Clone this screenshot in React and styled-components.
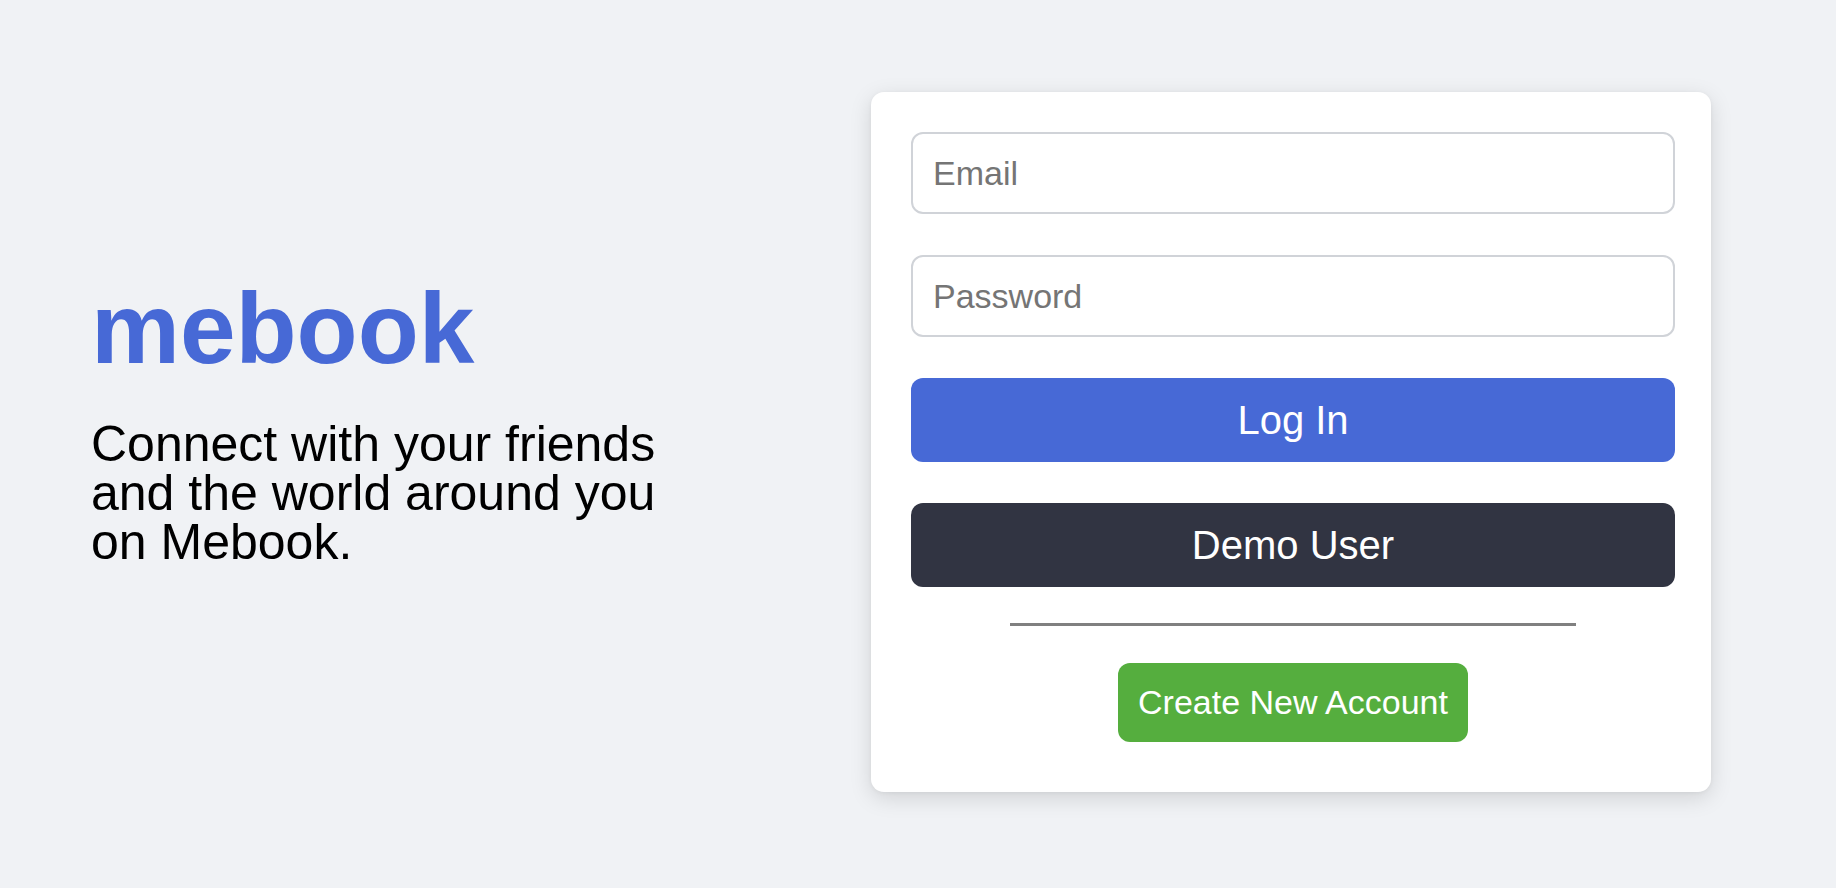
import React from "react";
import styled, { createGlobalStyle } from "styled-components";

const Global = createGlobalStyle`
  html, body { margin: 0; padding: 0; }
  body {
    background: #f0f2f5;
    font-family: "Liberation Sans", Arial, Helvetica, sans-serif;
    min-height: 888px;
  }
  * { box-sizing: border-box; }
`;

const Page = styled.main`
  display: flex;
  align-items: flex-start;
  padding: 92px 125px 0 91px;
  min-height: 888px;
`;

const Intro = styled.section`
  flex: 1;
  padding-top: 186px;
`;

const Logo = styled.h1`
  margin: 0;
  font-size: 100px;
  line-height: 100px;
  font-weight: 700;
  color: #4769d6;
  white-space: nowrap;
`;

const Tagline = styled.p`
  margin: 42px 0 0;
  font-size: 50px;
  line-height: 49px;
  font-weight: 400;
  color: #000;
  white-space: nowrap;
`;

const Card = styled.form`
  width: 840px;
  height: 700px;
  background: #fff;
  border-radius: 13px;
  box-shadow: 0 6px 22px rgba(0, 0, 0, 0.13), 0 1px 4px rgba(0, 0, 0, 0.05);
  padding: 40px 36px 0 40px;
  display: flex;
  flex-direction: column;
  align-items: center;
`;

const Input = styled.input`
  width: 764px;
  height: 82px;
  margin-bottom: 41px;
  border: 2px solid #d0d3d8;
  border-radius: 12px;
  padding: 0 20px;
  font-family: "Liberation Sans", Arial, sans-serif;
  font-size: 34px;
  color: #1c1e21;
  background: #fff;
  outline: none;
  &::placeholder { color: #757575; }
`;

const Button = styled.button`
  width: 764px;
  height: 84px;
  margin-bottom: ${(p) => p.$mb}px;
  border: none;
  border-radius: 12px;
  background: ${(p) => p.$bg};
  color: #fff;
  font-family: "Liberation Sans", Arial, sans-serif;
  font-size: 40px;
  cursor: pointer;
`;

const Divider = styled.div`
  width: 566px;
  height: 3px;
  background: #808080;
  margin: 0 0 37px;
`;

const CreateButton = styled.button`
  height: 79px;
  padding: 0 20px;
  border: none;
  border-radius: 12px;
  background: #55ae3e;
  color: #fff;
  font-family: "Liberation Sans", Arial, sans-serif;
  font-size: 34px;
  cursor: pointer;
`;

export default function App() {
  return (
    <>
      <Global />
      <Page>
        <Intro>
          <Logo>mebook</Logo>
          <Tagline>
            Connect with your friends
            <br />
            and the world around you
            <br />
            on Mebook.
          </Tagline>
        </Intro>
        <Card onSubmit={(e) => e.preventDefault()}>
          <Input type="email" placeholder="Email" />
          <Input type="password" placeholder="Password" />
          <Button type="submit" $bg="#4769d6" $mb={41}>Log In</Button>
          <Button type="button" $bg="#313442" $mb={36}>Demo User</Button>
          <Divider />
          <CreateButton type="button">Create New Account</CreateButton>
        </Card>
      </Page>
    </>
  );
}
